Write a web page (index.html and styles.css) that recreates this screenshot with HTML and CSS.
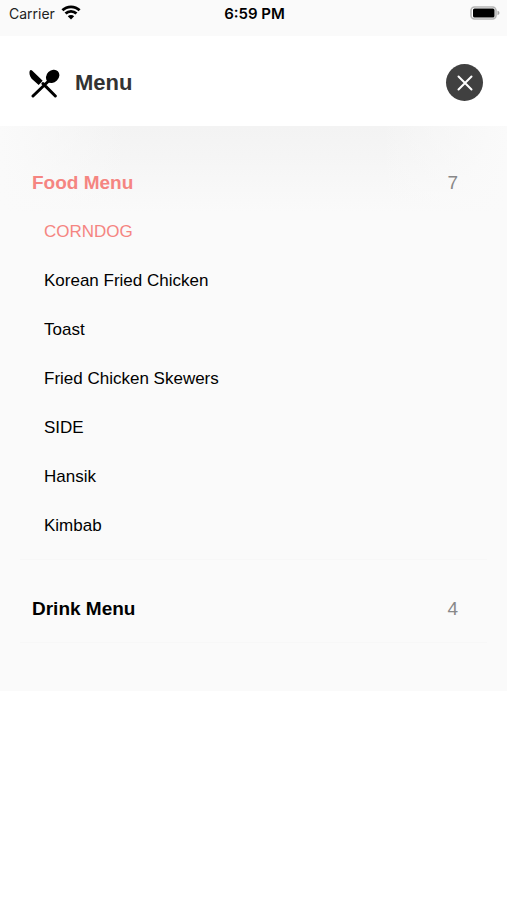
FILE: index.html
```
<!DOCTYPE html>
<html lang="en">
<head>
<meta charset="utf-8">
<meta name="viewport" content="width=device-width, initial-scale=1">
<title>Menu</title>
<link rel="stylesheet" href="styles.css">
</head>
<body>
<div class="status">
  <div class="carrier">
    <span>Carrier</span>
    <svg class="wifi" viewBox="0 0 18 14" aria-hidden="true">
      <path d="M1 5a11.300 11.300 0 0 1 16 0M3.900 8a7.200 7.200 0 0 1 10.200 0" fill="none" stroke="#000" stroke-width="2.600"/>
      <path d="M9 13.600 6 10.600a4.300 4.300 0 0 1 6 0z"/>
    </svg>
  </div>
  <time class="clock">6:59 PM</time>
  <svg class="battery" viewBox="0 0 30 14" aria-hidden="true">
    <rect x="1" y="1" width="25" height="12" rx="3.500" fill="#fff" stroke="#b5b5b5" stroke-width="1.600"/>
    <rect x="3" y="2.500" width="21.500" height="9" rx="1.500"/>
    <path d="M27.500 4.800q2 .6 2 2.200t-2 2.200z" fill="#a5a5a5"/>
  </svg>
</div>
<header class="header">
  <svg class="cutlery" viewBox="0 0 96 90" aria-hidden="true">
    <path d="M5 9Q8 3 13 8L44 38 32 51 11 32Q2 20 5 9z"/>
    <ellipse cx="74" cy="25" rx="18" ry="22" transform="rotate(45 74 25)"/>
    <path d="M65 36 15 84M45 47 82 84" fill="none" stroke="#000" stroke-width="9" stroke-linecap="round"/>
  </svg>
  <h1 class="title">Menu</h1>
  <button class="close" type="button" aria-label="Close">
    <svg class="cross" viewBox="0 0 16 16" aria-hidden="true"><path d="M1.500 1.500l13 13M14.500 1.500l-13 13"/></svg>
  </button>
</header>
<main class="panel">
  <section class="group">
    <h2 class="heading active"><a href="#food">Food Menu</a><span class="count">7</span></h2>
    <ul class="items" id="food">
      <li><a class="active" href="#corndog">CORNDOG</a></li>
      <li><a href="#chicken">Korean Fried Chicken</a></li>
      <li><a href="#toast">Toast</a></li>
      <li><a href="#skewers">Fried Chicken Skewers</a></li>
      <li><a href="#side">SIDE</a></li>
      <li><a href="#hansik">Hansik</a></li>
      <li><a href="#kimbab">Kimbab</a></li>
    </ul>
  </section>
  <section class="group">
    <h2 class="heading"><a href="#drink">Drink Menu</a><span class="count">4</span></h2>
  </section>
</main>
</body>
</html>
```

FILE: styles.css
```
* { box-sizing: border-box; }

body {
  margin: 0;
  background: #fff;
  color: #000;
  font-family: "Liberation Sans", Arial, sans-serif;
}

a { color: inherit; text-decoration: none; }

.status {
  display: grid;
  grid-template-columns: 1fr auto 1fr;
  align-items: start;
  height: 36px;
  padding: 4px 7px 0 9px;
  background: #fafafa;
  font-family: Inter, sans-serif;
  font-size: 14px;
  line-height: 20px;
}

.carrier { display: flex; gap: 6px; color: #222; }
.wifi { width: 20px; height: 15px; margin-top: 1px; }
.clock { font-size: 15px; font-weight: 600; }
.battery { width: 30px; height: 14px; margin-top: 2px; justify-self: end; }

.header {
  display: flex;
  align-items: center;
  height: 90px;
  padding: 3px 24px 0 28px;
}

.cutlery { width: 32px; height: 30px; }

.title {
  margin: 0 auto 0 15px;
  color: #333;
  font-size: 22px;
  line-height: 28px;
}

.close {
  display: grid;
  place-items: center;
  width: 37px;
  height: 37px;
  padding: 0;
  border: 0;
  border-radius: 50%;
  background: #404040;
}

.cross {
  width: 16px;
  height: 16px;
  fill: none;
  stroke: #fff;
  stroke-width: 2;
  stroke-linecap: round;
}

.panel {
  padding: 8px 20px 48px;
  background:
    linear-gradient(to right, #fafafa, #fafafa00 25%, #fafafa00 75%, #fafafa),
    linear-gradient(#f3f3f3, #f5f5f5 30px, #fafafa 86px);
}

.group {
  padding: 24px 12px 9px;
  border-bottom: 1px solid #f7f7f7;
}

.heading {
  display: flex;
  align-items: center;
  justify-content: space-between;
  height: 49px;
  margin: 0;
  padding-right: 17px;
  font-size: 19px;
}

.active { color: #f58581; }

.count {
  color: #888;
  font-weight: 400;
}

.items {
  margin: 0;
  padding: 0 0 0 12px;
  list-style: none;
  font-size: 17px;
  line-height: 49px;
}

.items a { display: block; }
```
